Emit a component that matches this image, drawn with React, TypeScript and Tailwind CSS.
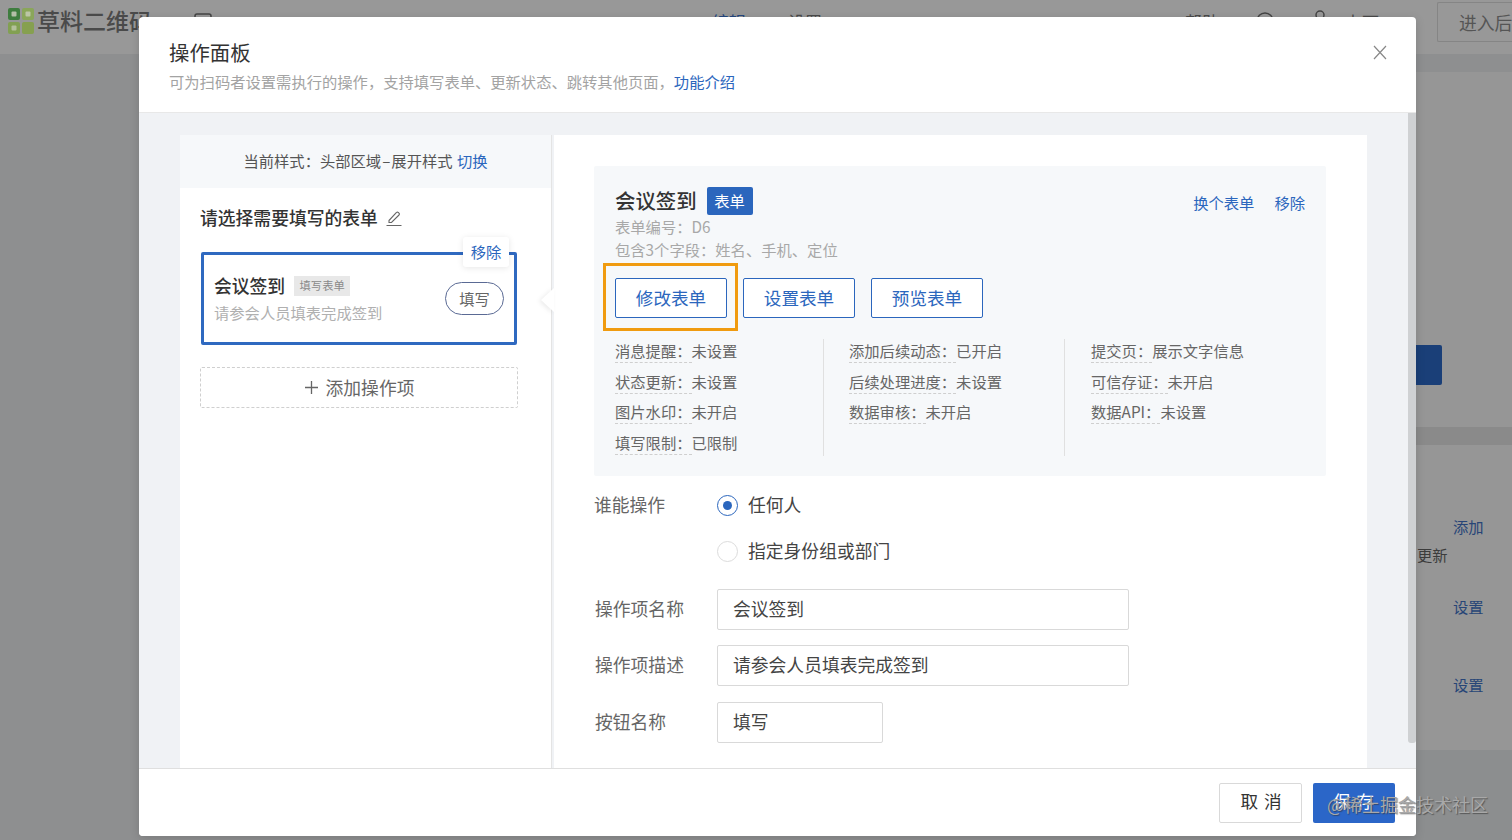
const BLUE = "text-[#2b66bd]";
const COLON = "\uFF1A";
const COMMA = "\uFF0C";

function InfoRow({ label, value }: { label: string; value: string }) {
  return (
    <div className="flex h-[24px] text-[15.3px] leading-[22px] text-[#666]">
      <span className="border-b border-dashed border-[#cfcfcf]">{label}{COLON}</span>
      <span>{value}</span>
    </div>
  );
}

function InfoCol({ rows, className }: { rows: [string, string][]; className: string }) {
  return <div className={`flex h-[117px] flex-col gap-[6.6px] ${className}`}>{rows.map(([l, v]) => <InfoRow key={l} label={l} value={v} />)}</div>;
}

function OutlineBtn({ children }: { children: string }) {
  return <button className="h-[40px] w-[112px] rounded-[2px] border border-[#2b66bd] bg-white text-[17.6px] text-[#2b66bd]">{children}</button>;
}

function Field({ label, value, wide, className }: { label: string; value: string; wide?: boolean; className: string }) {
  return (
    <div className={`flex items-center ${className}`}>
      <div className="w-[122px] pb-[2px] text-[17.8px] text-[#666]">{label}</div>
      <div className={`flex h-[41px] items-center rounded-[2px] border border-[#d9d9d9] bg-white pb-[2px] pl-[15px] text-[17.8px] text-[#444] ${wide ? "w-[412px]" : "w-[166px]"}`}>{value}</div>
    </div>
  );
}

function Background() {
  return (
    <div className="flex h-full flex-col">
      <header className="flex h-[54px] shrink-0 items-center bg-[#989898] pl-[8px] text-[#4a4a4a]">
        <svg className="shrink-0 -translate-y-[6px]" width="26" height="26" viewBox="0 0 26 26">
          <rect x="0" y="0" width="12" height="12" rx="2" fill="#3f7d3f" />
          <rect x="14" y="0" width="12" height="12" rx="2" fill="#8aa65a" />
          <rect x="0" y="14" width="12" height="12" rx="2" fill="#82a052" />
          <rect x="14" y="14" width="12" height="12" rx="2" fill="#86a050" />
          <rect x="3.5" y="3.5" width="5" height="5" rx="1" fill="#b4bfa8" />
          <rect x="17.5" y="3.5" width="5" height="5" rx="1" fill="#bcc6a6" />
          <rect x="3.5" y="17.5" width="5" height="5" rx="1" fill="#b4c09a" />
        </svg>
        <span className="ml-[3px] w-[157px] shrink-0 -translate-y-[7px] whitespace-nowrap text-[23px] font-medium">草料二维码</span>
        <svg className="shrink-0 -translate-y-[6px]" width="18" height="16" viewBox="0 0 18 16" fill="none" stroke="#444" strokeWidth="1.5"><rect x="1" y="1" width="16" height="14" rx="2" /></svg>
        <span className="ml-[500px] w-[34px] shrink-0 -translate-y-[5px] text-[17px] whitespace-nowrap text-[#24477f]">编辑</span>
        <span className="ml-[42px] w-[34px] shrink-0 -translate-y-[5px] text-[17px] whitespace-nowrap">设置</span>
        <span className="ml-[363px] w-[34px] shrink-0 -translate-y-[5px] text-[17px] whitespace-nowrap">帮助</span>
        <svg className="ml-[36px] shrink-0 -translate-y-[6px]" width="20" height="20" viewBox="0 0 20 20" fill="none" stroke="#444" strokeWidth="1.5"><circle cx="10" cy="10" r="8" /></svg>
        <svg className="ml-[38px] shrink-0 -translate-y-[8px]" width="14" height="18" viewBox="0 0 14 18" fill="none" stroke="#444" strokeWidth="1.5"><circle cx="7" cy="5" r="4" /></svg>
        <span className="ml-[18px] w-[38px] shrink-0 -translate-y-[5px] text-[17px] whitespace-nowrap">上下</span>
        <div className="ml-[54px] flex h-[40px] w-[75px] shrink-0 -translate-y-[5px] items-center overflow-hidden rounded-l-[2px] border border-r-0 border-[#858585] pl-[21px] text-[17.8px] whitespace-nowrap text-[#555]">进入后</div>
      </header>
      <div className="flex flex-1 justify-end bg-[#8e8f90]">
        <div className="mt-[18px] flex w-[172px] flex-col bg-[#969696] text-[15.3px] text-[#274577]">
          <div className="mt-[273px] h-[40px] w-[102px] rounded-[2px] bg-[#1a3f78]" />
          <div className="mt-[42px] h-[18px] shrink-0 bg-[#8a8a8a]" />
          <div className="mt-[70px] pl-[113px] leading-[22px]">添加</div>
          <div className="mt-[6px] pl-[77px] leading-[22px] text-[#3c3c3c]">更新</div>
          <div className="mt-[30px] pl-[113px] leading-[22px]">设置</div>
          <div className="mt-[56px] pl-[113px] leading-[22px]">设置</div>
          <div className="mt-[55px] flex-1 bg-[#8c8e8f]" />
        </div>
      </div>
    </div>
  );
}

export default function App() {
  return (
    <div lang="zh-CN" className="relative h-[840px] w-[1512px] overflow-hidden bg-[#8e8f90] font-['Noto_Sans_CJK_SC','Noto_Sans',sans-serif]">
      <Background />

      <div className="absolute top-[17px] left-[139px] flex h-[819px] w-[1277px] flex-col overflow-hidden rounded-[4px] bg-white shadow-[0_2px_10px_rgba(0,0,0,0.15)]">
        <div className="relative h-[96px] shrink-0 border-b border-[#e8e8e8] pt-[20px] pl-[30px]">
          <div className="text-[20.4px] leading-[30px] text-[#333]">操作面板</div>
          <div className="mt-[3px] text-[15.3px] leading-[22px] text-[#a3a3a3]">
            可为扫码者设置需执行的操作{COMMA}支持填写表单、更新状态、跳转其他页面{COMMA}<span className={BLUE}>功能介绍</span>
          </div>
          <svg className="absolute top-[28px] right-[29px]" width="14" height="15" viewBox="0 0 14 15" fill="none" stroke="#888" strokeWidth="1.2"><path d="M1 1l12 13M13 1L1 14" /></svg>
        </div>

        <div className="relative flex min-h-0 flex-1 overflow-hidden bg-[#f0f2f5] pt-[22px] pl-[41px]">
          <div className="flex w-[372px] shrink-0 flex-col border-r border-[#e4e4e4] bg-white">
            <div className="flex h-[53px] shrink-0 items-center justify-center bg-[#f6f8fa] pb-[2px] text-[15.3px] text-[#555]">
              <span>当前样式{COLON}头部区域<span className="px-[1px]">–</span>展开样式 <span className={`ml-[1px] ${BLUE}`}>切换</span></span>
            </div>
            <div className="pt-[18px] pl-[20px]">
              <div className="flex h-[24px] items-center text-[17.8px] font-medium text-[#333]">
                <span className="-translate-y-px">请选择需要填写的表单</span>
                <svg className="ml-[8px]" width="16" height="16" viewBox="0 0 16 16" fill="none" stroke="#666" strokeWidth="1.1"><path d="M3 10.5L10.5 2.5a1.2 1.2 0 0 1 1.8 0l.7.7a1.2 1.2 0 0 1 0 1.8L5.5 12.5H3zM0.5 15.5h15" /></svg>
              </div>
              <div className="relative mt-[22px] ml-px flex h-[93px] w-[316px] items-center justify-between rounded-[2px] border-[3px] border-[#2f69c0] px-[10px]">
                <div className="-translate-y-px">
                  <div className="flex items-center">
                    <span className="text-[17.8px] leading-[24px] font-medium text-[#333]">会议签到</span>
                    <span className="ml-[9px] flex h-[20px] w-[56px] translate-y-px items-center justify-center bg-[#e8e8e8] text-[11.3px] text-[#8a8a8a]">填写表单</span>
                  </div>
                  <div className="mt-[4px] text-[15.3px] leading-[22px] text-[#b0b0b0]">请参会人员填表完成签到</div>
                </div>
                <div className="flex h-[33px] w-[59px] items-center justify-center rounded-full border border-[#5a6a94] text-[15.3px] text-[#666]">填写</div>
                <div className={`absolute -top-[18px] left-[259px] flex h-[30px] w-[46px] items-center justify-center rounded-[3px] bg-white pb-[2px] text-[15.3px] shadow-[0_1px_6px_rgba(0,0,0,0.1)] ${BLUE}`}>移除</div>
              </div>
              <div className="mt-[22px] flex h-[41px] w-[318px] items-center justify-center gap-[7px] rounded-[2px] border border-dashed border-[#cfcfcf] text-[17.8px] text-[#666]">
                <svg width="15" height="15" viewBox="0 0 15 15" stroke="#666" strokeWidth="1.3"><path d="M7.5 1v13M1 7.5h13" /></svg>
                添加操作项
              </div>
            </div>
          </div>

          <div className="relative ml-[2px] w-[813px] shrink-0 bg-white pt-[31px] pl-[40px]">
            <svg className="absolute top-[153px] -left-[14px] drop-shadow-[-2px_1px_2px_rgba(0,0,0,0.08)]" width="14" height="24" viewBox="0 0 14 24"><path d="M14 0L1 12l13 12z" fill="#fff" /></svg>

            <div className="relative h-[310px] w-[732px] rounded-[2px] bg-[#f6f8fa] px-[21px] pt-[21px] pb-[20px]">
              <div className="flex h-[28px] items-center">
                <span className="-translate-y-px text-[20.4px] font-medium text-[#333]">会议签到</span>
                <span className="ml-[10px] flex h-[28px] w-[46px] items-center justify-center rounded-[2px] bg-[#2b66bd] pb-[2px] text-[15.3px] text-white">表单</span>
                <span className={`ml-auto translate-y-px text-[15.3px] ${BLUE}`}>换个表单</span>
                <span className={`ml-[20px] translate-y-px text-[15.3px] ${BLUE}`}>移除</span>
              </div>
              <div className="text-[15.3px] leading-[23px] text-[#a8a8a8]">表单编号{COLON}D6</div>
              <div className="text-[15.3px] leading-[23px] text-[#a8a8a8]">包含3个字段{COLON}姓名、手机、定位</div>
              <div className="mt-[17px] flex gap-[16px]">
                <OutlineBtn>修改表单</OutlineBtn>
                <OutlineBtn>设置表单</OutlineBtn>
                <OutlineBtn>预览表单</OutlineBtn>
              </div>
              <div className="mt-[21px] flex">
                <InfoCol className="w-[209px] border-r border-[#e0e0e0]" rows={[["消息提醒", "未设置"], ["状态更新", "未设置"], ["图片水印", "未开启"], ["填写限制", "已限制"]]} />
                <InfoCol className="w-[241px] border-r border-[#e0e0e0] pl-[25px]" rows={[["添加后续动态", "已开启"], ["后续处理进度", "未设置"], ["数据审核", "未开启"]]} />
                <InfoCol className="pl-[26px]" rows={[["提交页", "展示文字信息"], ["可信存证", "未开启"], ["数据API", "未设置"]]} />
              </div>
              <div className="absolute top-[97px] left-[9px] h-[68px] w-[135px] border-[3px] border-[#f09b10]" />
            </div>

            <div className="mt-[9px] flex">
              <div className="w-[123px] pb-[2px] text-[17.8px] leading-[38px] text-[#666]">谁能操作</div>
              <div className="flex flex-col gap-[6px] text-[17.8px] text-[#444]">
                <div className="flex h-[40px] items-center gap-[10px]">
                  <span className="flex h-[21px] w-[21px] items-center justify-center rounded-full border border-[#2b66bd]"><span className="h-[9px] w-[9px] rounded-full bg-[#2b66bd]" /></span>
                  <span className="-translate-y-px">任何人</span>
                </div>
                <div className="flex h-[40px] items-center gap-[10px]">
                  <span className="h-[21px] w-[21px] rounded-full border border-[#dcdcdc]" />
                  <span className="-translate-y-px">指定身份组或部门</span>
                </div>
              </div>
            </div>
            <Field className="mt-[18px] ml-px" label="操作项名称" value="会议签到" wide />
            <Field className="mt-[15px] ml-px" label="操作项描述" value="请参会人员填表完成签到" wide />
            <Field className="mt-[16px] ml-px" label="按钮名称" value="填写" />
          </div>

          <div className="absolute top-0 right-0 h-[630px] w-[8px] rounded-b-[3px] bg-[#cfd1d3]" />
        </div>

        <div className="flex h-[68px] shrink-0 items-center justify-end gap-[11px] border-t border-[#dfdfdf] bg-white pr-[21px]">
          <button className="h-[40px] w-[83px] rounded-[2px] border border-[#d9d9d9] bg-white pb-[2px] pl-[2px] text-[17.6px] tracking-[1px] text-[#333]">取 消</button>
          <button className="h-[40px] w-[82px] rounded-[2px] bg-[#2b66c8] pb-[2px] text-[17.6px] tracking-[1px] text-white">保 存</button>
        </div>
      </div>

      <div className="absolute top-[791px] left-[1327px] text-[18px] leading-[26px] whitespace-nowrap text-[#a8a8a8] [text-shadow:1px_1px_1px_rgba(50,50,50,0.6)]">@稀土掘金技术社区</div>
    </div>
  );
}
